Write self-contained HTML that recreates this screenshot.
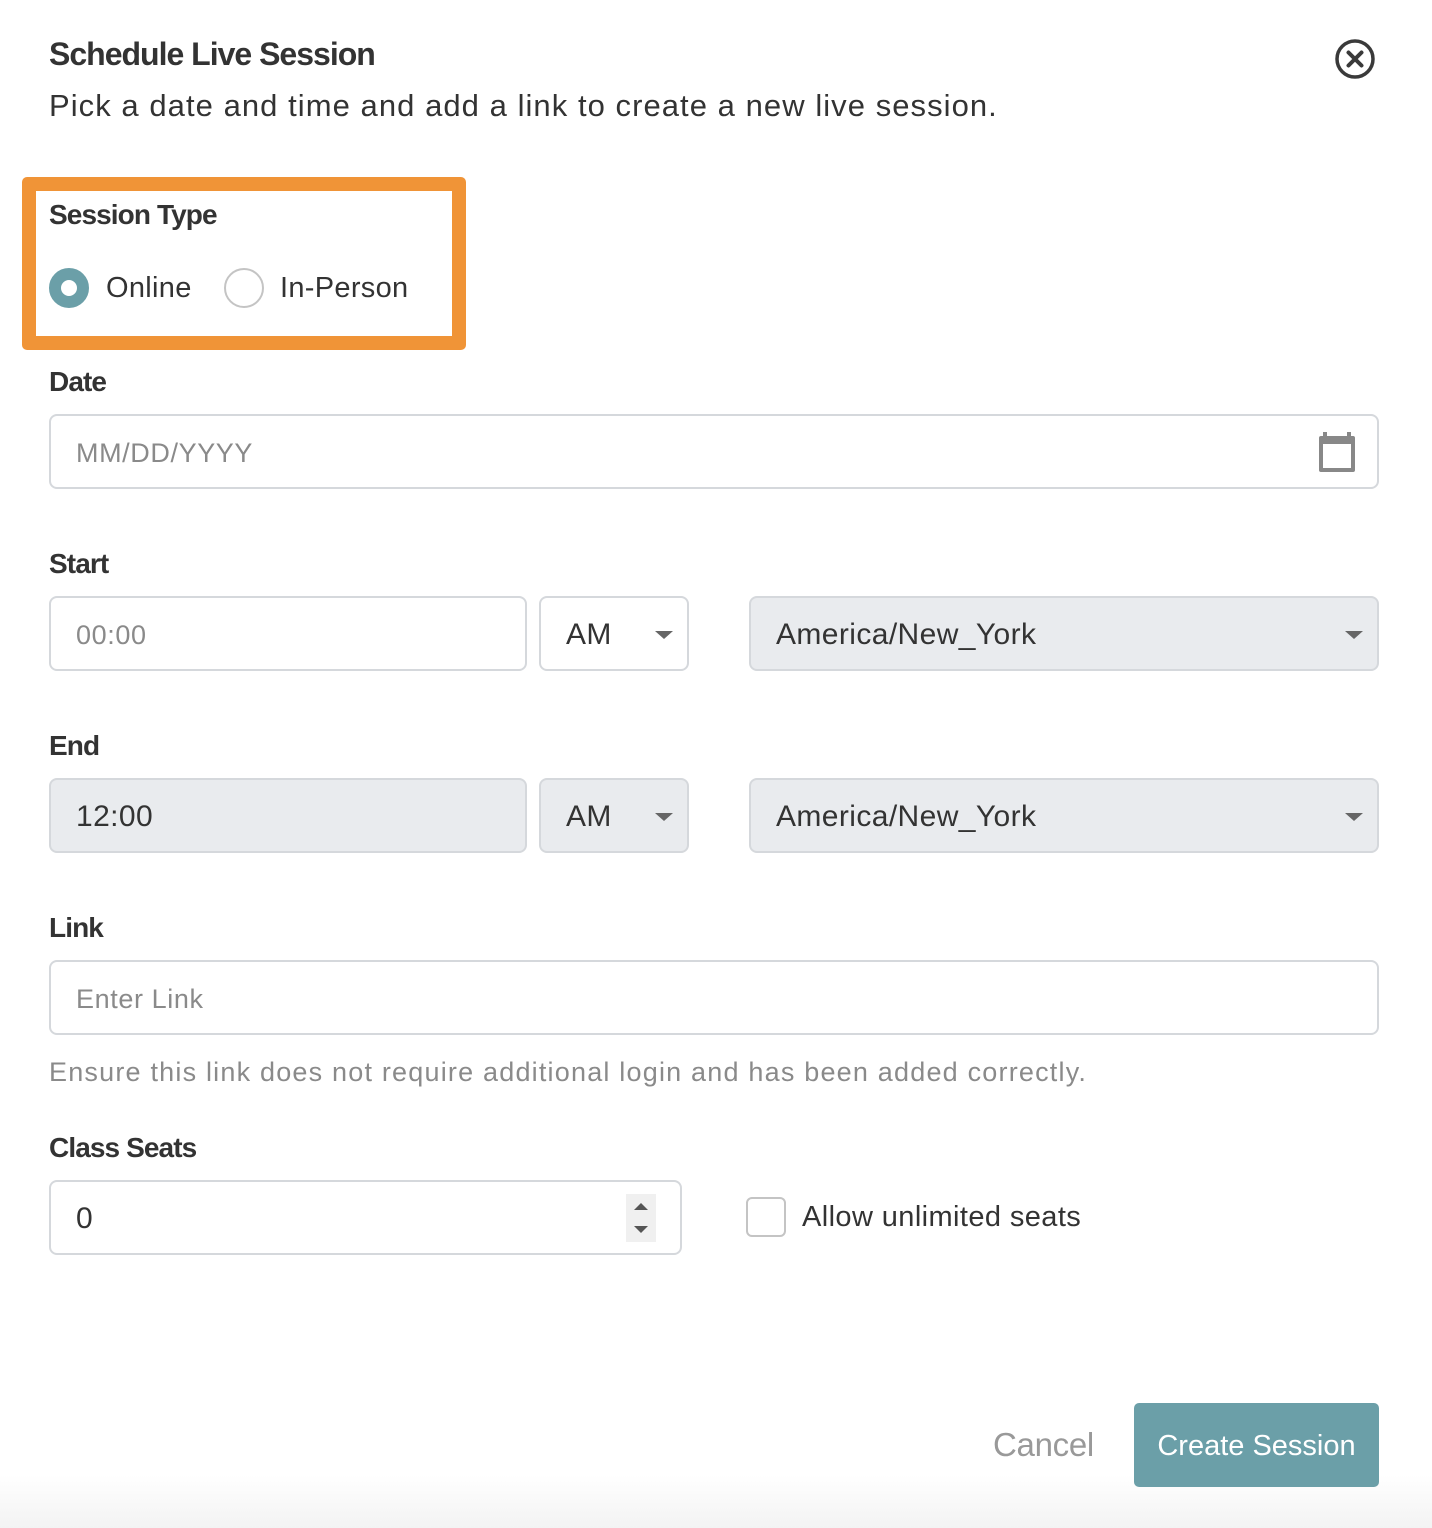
<!DOCTYPE html>
<html><head><style>
*{box-sizing:border-box;margin:0;padding:0}
body{width:1432px;height:1528px;background:#fff;font-family:"Liberation Sans",sans-serif;color:#333;position:relative;overflow:hidden}
.a{position:absolute}
.lbl{font-size:28px;font-weight:600;color:#333;letter-spacing:-0.9px}
.inp{position:absolute;border:2px solid #d5d8dc;border-radius:8px;height:75px;font-size:30px;display:flex;align-items:center;padding-left:25px;padding-top:3px;letter-spacing:0.4px}
.ph{color:#8a8a8a;font-size:27px;letter-spacing:0.6px}
.g{background:#e9ebee}
.car{position:absolute;width:0;height:0;border-left:9px solid transparent;border-right:9px solid transparent;border-top:8px solid #666}
</style></head><body>
<div class="a" style="left:0;top:1475px;width:1432px;height:53px;background:linear-gradient(#fff,#f3f3f3)"></div>
<div class="a" style="left:49px;top:36px;font-size:32px;font-weight:600;color:#333;letter-spacing:-1px">Schedule Live Session</div>
<div class="a" style="left:49px;top:88px;font-size:31px;color:#333;letter-spacing:1.05px">Pick a date and time and add a link to create a new live session.</div>
<svg class="a" style="left:1334px;top:38px" width="42" height="42" viewBox="0 0 42 42"><circle cx="21" cy="21" r="18" fill="none" stroke="#3a3a3a" stroke-width="3.5"/><path d="M14.5 14.5L27.5 27.5M27.5 14.5L14.5 27.5" stroke="#3a3a3a" stroke-width="4" stroke-linecap="round"/></svg>

<div class="a" style="left:22px;top:177px;width:444px;height:173px;border:14px solid #f09437;border-radius:5px"></div>
<div class="a lbl" style="left:49px;top:199px">Session Type</div>
<div class="a" style="left:49px;top:268px;width:40px;height:40px;border-radius:50%;border:12px solid #6b9fa8;background:#fff"></div>
<div class="a" style="left:106px;top:272px;font-size:29px;letter-spacing:0.3px">Online</div>
<div class="a" style="left:224px;top:268px;width:40px;height:40px;border-radius:50%;border:2px solid #c4c4c4"></div>
<div class="a" style="left:280px;top:272px;font-size:29px;letter-spacing:0.3px">In-Person</div>

<div class="a lbl" style="left:49px;top:366px">Date</div>
<div class="inp" style="left:49px;top:414px;width:1330px"><span class="ph">MM/DD/YYYY</span></div>
<svg class="a" style="left:1318px;top:432px" width="38" height="40" viewBox="0 0 38 40"><rect x="1" y="4" width="36" height="36" rx="2" fill="#888"/><rect x="5" y="12" width="28" height="24" fill="#fff"/><rect x="5" y="0" width="4" height="6" fill="#888"/><rect x="29" y="0" width="4" height="6" fill="#888"/></svg>

<div class="a lbl" style="left:49px;top:548px">Start</div>
<div class="inp" style="left:49px;top:596px;width:478px"><span class="ph">00:00</span></div>
<div class="inp" style="left:539px;top:596px;width:150px">AM</div><div class="car" style="left:655px;top:631px"></div>
<div class="inp g" style="left:749px;top:596px;width:630px">America/New_York</div><div class="car" style="left:1345px;top:631px"></div>

<div class="a lbl" style="left:49px;top:730px">End</div>
<div class="inp g" style="left:49px;top:778px;width:478px">12:00</div>
<div class="inp g" style="left:539px;top:778px;width:150px">AM</div><div class="car" style="left:655px;top:813px"></div>
<div class="inp g" style="left:749px;top:778px;width:630px">America/New_York</div><div class="car" style="left:1345px;top:813px"></div>

<div class="a lbl" style="left:49px;top:912px">Link</div>
<div class="inp" style="left:49px;top:960px;width:1330px"><span class="ph">Enter Link</span></div>
<div class="a" style="left:49px;top:1057px;font-size:27px;color:#8a8a8a;letter-spacing:1.2px">Ensure this link does not require additional login and has been added correctly.</div>

<div class="a lbl" style="left:49px;top:1132px">Class Seats</div>
<div class="inp" style="left:49px;top:1180px;width:633px">0</div>
<div class="a" style="left:626px;top:1194px;width:30px;height:48px;background:#f0f0f0"></div>
<div class="a" style="left:634px;top:1203px;border-left:7px solid transparent;border-right:7px solid transparent;border-bottom:7px solid #555"></div>
<div class="a" style="left:634px;top:1226px;border-left:7px solid transparent;border-right:7px solid transparent;border-top:7px solid #555"></div>
<div class="a" style="left:746px;top:1197px;width:40px;height:40px;border:2px solid #c4c4c4;border-radius:6px"></div>
<div class="a" style="left:802px;top:1201px;font-size:29px;letter-spacing:0.4px">Allow unlimited seats</div>

<div class="a" style="left:993px;top:1426px;font-size:33px;color:#999;letter-spacing:-0.3px">Cancel</div>
<div class="a" style="left:1134px;top:1403px;width:245px;height:84px;background:#6b9fa8;border-radius:5px;color:#fff;font-size:29px;display:flex;align-items:center;justify-content:center;padding-top:3px">Create Session</div>
</body></html>
